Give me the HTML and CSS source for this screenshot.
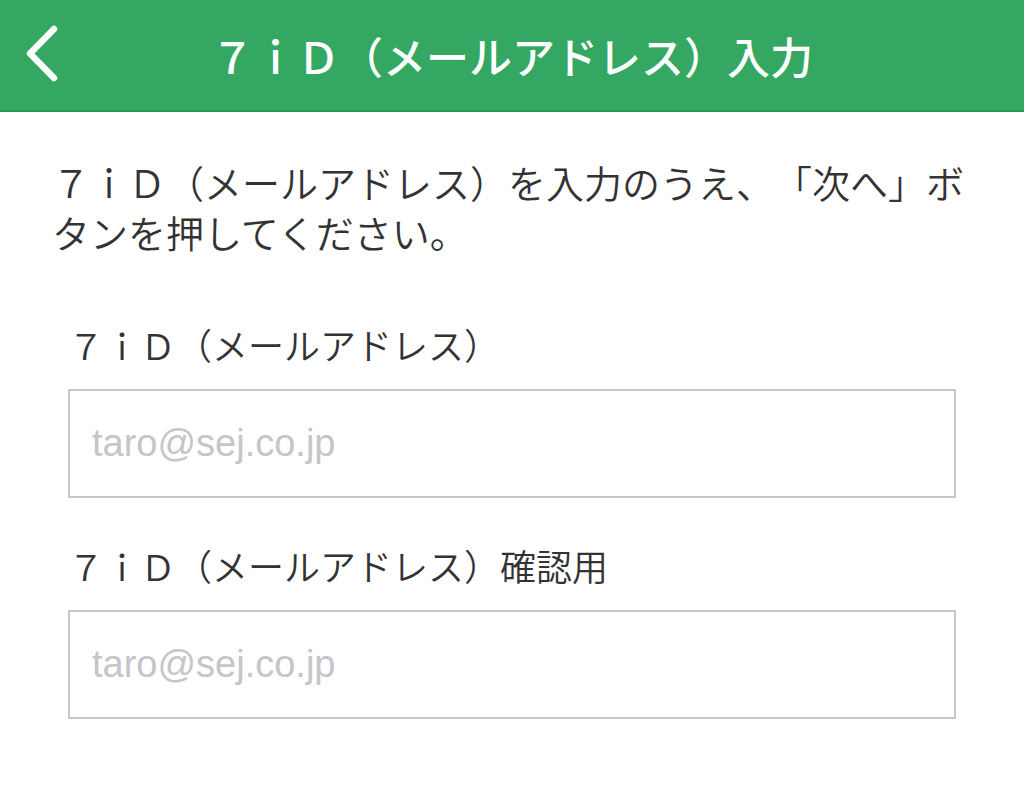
FILE: index.html
```html
<!DOCTYPE html>
<html lang="ja">
<head>
<meta charset="utf-8">
<title>７ｉＤ（メールアドレス）入力</title>
<link rel="stylesheet" href="styles.css">
</head>
<body>
<header class="navbar">
  <div class="nav-left">
    <button class="back" aria-label="戻る">
      <svg width="40" height="60" viewBox="0 0 40 60" aria-hidden="true">
        <path d="M31 4 L7 28.5 L31 53" fill="none" stroke="#fff" stroke-width="6.5" stroke-linecap="round" stroke-linejoin="round"/>
      </svg>
    </button>
  </div>
  <h1 class="title">７ｉＤ（メールアドレス）入力</h1>
  <div class="nav-right"></div>
</header>
<main class="content">
  <p class="lead">７ｉＤ（メールアドレス）を入力のうえ、「次へ」ボタンを押してください。</p>
  <form class="form">
    <div class="field">
      <label class="label" for="mail">７ｉＤ（メールアドレス）</label>
      <input class="input" id="mail" type="email" placeholder="taro@sej.co.jp">
    </div>
    <div class="field">
      <label class="label" for="mail2">７ｉＤ（メールアドレス）確認用</label>
      <input class="input" id="mail2" type="email" placeholder="taro@sej.co.jp">
    </div>
  </form>
</main>
</body>
</html>
```
FILE: styles.css
```css
html, body {
  margin: 0;
  padding: 0;
  background: #ffffff;
}
body {
  font-family: "Noto Sans CJK JP", "Noto Sans", sans-serif;
  color: #333333;
  text-spacing-trim: space-all;
}
.navbar {
  height: 110px;
  background: #34a863;
  border-bottom: 2px solid #2b9955;
  display: grid;
  grid-template-columns: 1fr auto 1fr;
  align-items: center;
}
.nav-left {
  display: flex;
  align-items: center;
  padding-left: 23px;
}
.back {
  background: none;
  border: 0;
  padding: 0;
  margin: 0;
  display: flex;
  cursor: pointer;
}
.title {
  margin: 0;
  color: #ffffff;
  font-size: 43px;
  font-weight: 500;
  line-height: 1;
  letter-spacing: 0;
}
.content {
  padding: 45px 52px;
}
.lead {
  margin: 0;
  font-size: 38px;
  line-height: 50px;
  font-weight: 350;
  color: #333333;
}
.form {
  margin: 67px 16px 0;
  display: flex;
  flex-direction: column;
  gap: 47px;
}
.field {
  display: flex;
  flex-direction: column;
  gap: 25px;
}
.label {
  padding-left: 0;
  font-size: 36px;
  line-height: 40px;
  font-weight: 350;
  color: #333333;
}
.input {
  box-sizing: border-box;
  width: 100%;
  height: 109px;
  margin: 0;
  border: 2px solid #c6c6c6;
  border-radius: 0;
  padding: 0 22px;
  font-family: "Liberation Sans", Arial, sans-serif;
  font-size: 38px;
  color: #333333;
  background: #ffffff;
  outline: none;
}
.input::placeholder {
  color: #c5c5ca;
}
```
